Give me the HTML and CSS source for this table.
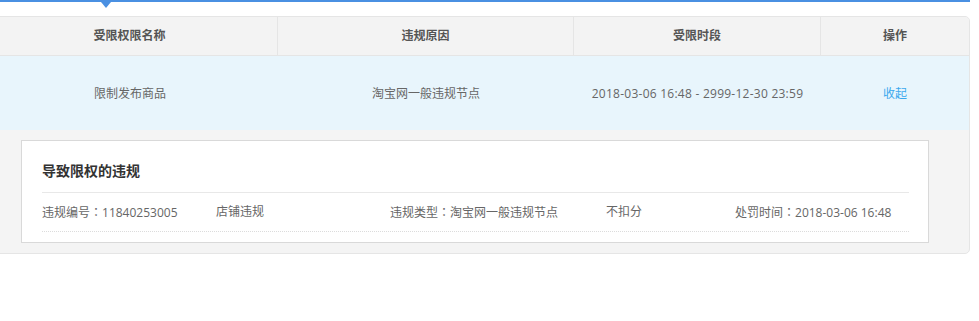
FILE: index.html
```html
<!DOCTYPE html>
<html lang="zh-CN">
<head>
<meta charset="utf-8">
<link rel="stylesheet" href="styles.css">
</head>
<body>
<div class="topbar"><span class="caret"></span></div>
<div class="panel">
  <div class="row head">
    <div class="cell">受限权限名称</div>
    <div class="cell">违规原因</div>
    <div class="cell">受限时段</div>
    <div class="cell">操作</div>
  </div>
  <div class="row body">
    <div class="cell">限制发布商品</div>
    <div class="cell">淘宝网一般违规节点</div>
    <div class="cell date">2018-03-06 16:48 - 2999-12-30 23:59</div>
    <div class="cell"><a class="link">收起</a></div>
  </div>
  <div class="detail">
    <div class="box">
      <div class="title">导致限权的违规</div>
      <div class="items">
        <div>违规编号<span class="colon" lang="ja">：</span>11840253005</div>
        <div>店铺违规</div>
        <div>违规类型<span class="colon" lang="ja">：</span>淘宝网一般违规节点</div>
        <div>不扣分</div>
        <div>处罚时间<span class="colon" lang="ja">：</span>2018-03-06 16:48</div>
      </div>
    </div>
  </div>
</div>
</body>
</html>
```
FILE: styles.css
```css
html, body { margin: 0; padding: 0; background: #fff; }
body {
  font-family: "Open Sans", "Noto Sans CJK SC", sans-serif;
  font-size: 12px;
  color: #666;
  overflow: hidden;
}
.topbar {
  position: relative;
  width: 970px;
  height: 14px;
  border-top: 2px solid #4a90e2;
}
.caret {
  position: absolute;
  left: 101px;
  top: 0;
  width: 0;
  height: 0;
  border-left: 5px solid transparent;
  border-right: 5px solid transparent;
  border-top: 6px solid #4a90e2;
}
.panel {
  margin-left: -19px;
  width: 987px;
  border: 1px solid #e5e5e5;
  border-radius: 0 5px 5px 0;
  overflow: hidden;
  background: #f4f4f4;
}
.row {
  display: grid;
  grid-template-columns: 296px 296px 247px 148px;
}
.cell {
  display: flex;
  align-items: center;
  justify-content: center;
  line-height: 20px;
}
.head {
  height: 38px;
  background: #f3f3f3;
  border-bottom: 1px solid #e5e5e5;
  font-weight: bold;
  color: #555;
}
.head .cell { border-right: 1px solid #e5e5e5; }
.head .cell:last-child { border-right: none; }
.body {
  height: 73px;
  padding-top: 1px;
  background: #e8f5fc;
}
.date { letter-spacing: 0.25px; }
.link { color: #3ba9ee; cursor: pointer; }
.detail {
  padding: 10px 40px 10px 39px;
}
.box {
  background: #fff;
  border: 1px solid #d9d9d9;
  padding: 0 19px 10px 20px;
}
.title {
  padding: 20px 0 11px;
  line-height: 20px;
  font-size: 14px;
  font-weight: bold;
  color: #333;
  border-bottom: 1px solid #e8e8e8;
}
.items {
  display: grid;
  grid-template-columns: 174px 174px 216px 129px auto;
  height: 38px;
  align-items: center;
  border-bottom: 1px dotted #dcdcdc;
  line-height: 20px;
  color: #666;
}
.colon {
  font-family: "Noto Sans CJK JP", sans-serif;
}
```
